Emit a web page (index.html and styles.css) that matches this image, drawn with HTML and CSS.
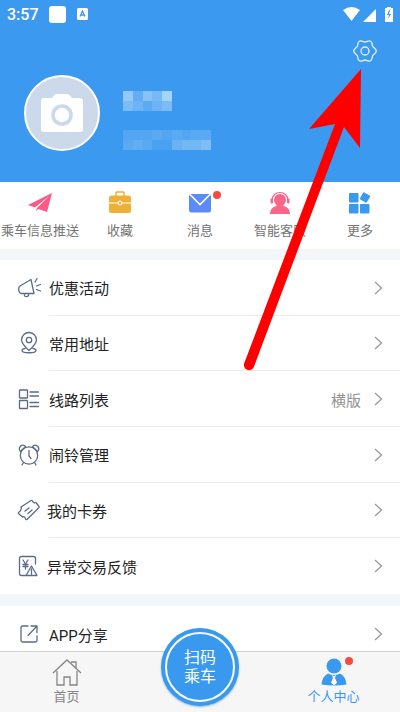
FILE: index.html
```html
<!DOCTYPE html>
<html lang="zh-CN">
<head>
<meta charset="utf-8">
<meta name="viewport" content="width=device-width, initial-scale=1">
<title>个人中心</title>
<link rel="stylesheet" href="styles.css">
</head>
<body>
<div class="app">
  <header class="header">
    <div class="status">
      <span class="clock">3:57</span>
      <span class="notice"></span>
      <svg class="notice-a" viewBox="0 0 11 12"><rect width="11" height="12" rx="1.5" fill="#fff"/><path d="M3 8.5 5.5 3 8 8.5M4 7h3" fill="none" stroke="#3b99ef" stroke-width="1.3"/></svg>
      <svg class="signals" viewBox="0 0 50 16"><g fill="#fff"><path d="M0 4Q8.500-2 17 4L8.500 15Z"/><path d="M20 16 33 3V16Z"/><path d="M44 1h4v1h1.500q.5 0 .5.500V15.500q0 .5-.5.500h-7q-.5 0-.5-.5V2.500q0-.5.500-.5H44Z"/></g><path d="m46 4-2 5h2l-1 4 3-5h-2l1-4Z" fill="#3b99ef"/></svg>
    </div>
    <button class="settings" aria-label="设置">
      <svg viewBox="0 0 24 24"><g fill="none" stroke="#e5f2fd" stroke-width="1.3"><path d="M23.300 12C23.300 9.800 20.700 9.100 19.800 7.500C18.900 5.900 19.500 3.300 17.650 2.200C15.800 1.100 13.800 3 12 3C10.200 3 8.200 1.100 6.350 2.200C4.500 3.300 5.100 5.900 4.200 7.500C3.300 9.100.7 9.800.7 12C.7 14.200 3.300 14.900 4.200 16.500C5.100 18.100 4.500 20.700 6.350 21.800C8.200 22.900 10.200 21 12 21C13.800 21 15.800 22.900 17.650 21.800C19.500 20.700 18.900 18.100 19.800 16.500C20.700 14.900 23.300 14.200 23.300 12Z"/><circle cx="12" cy="12" r="4"/></g></svg>
    </button>
    <div class="profile">
      <button class="avatar" aria-label="头像">
        <svg viewBox="0 0 44 40"><path d="M4 5h8l3-3.500Q15.500 1 16.500 1h11q1 0 1.500.5L32 5h8q3 0 3 3v28q0 3-3 3H4q-3 0-3-3V8q0-3 3-3Z" fill="#fff"/><circle cx="22" cy="22" r="9" fill="#fff" stroke="#cbd9eb" stroke-width="3.600"/></svg>
      </button>
      <div class="masked">
        <svg class="mask-name" viewBox="0 0 50 20" preserveAspectRatio="none" shape-rendering="crispEdges"><path fill="#93c8f9" d="M0 0h10v10H0z"/><path fill="#62aef4" d="M10 0h10v10H10z"/><path fill="#8ac1f7" d="M20 0h10v10H20z"/><path fill="#78b8f6" d="M30 0h10v10H30z"/><path fill="#a5d4fb" d="M40 0h10v10H40z"/><path fill="#7cbbf6" d="M0 10h10v10H0zM40 10h10v10H40z"/><path fill="#6db3f5" d="M10 10h10v10H10zM30 10h10v10H30z"/><path fill="#5aaaf4" d="M20 10h10v10H20z"/></svg>
        <svg class="mask-id" viewBox="0 0 90 20" preserveAspectRatio="none" shape-rendering="crispEdges"><path fill="#54a6f2" d="M0 0h90v20H0z"/><path fill="#59aaf3" d="M30 0h10v10H30zM50 0h10v10H50zM70 0h20v10H70zM0 10h10v10H0zM20 10h10v10H20z"/><path fill="#4aa1f1" d="M30 10h20v10H30z"/><path fill="#62aef4" d="M10 10h10v10H10z"/><path fill="#6bb2f4" d="M50 10h10v10H50z"/><path fill="#74b7f5" d="M60 10h20v10H60z"/><path fill="#80bdf6" d="M80 10h10v10H80z"/></svg>
      </div>
    </div>
  </header>

  <main class="content">
    <nav class="shortcuts">
      <a href="#"><svg viewBox="0 0 28 24"><path d="M26 2 2 14l7 2.500L23 5 11 17l-1 3 2.500-2L21 21Z" fill="#fb5a88"/></svg><span>乘车信息推送</span></a>
      <a href="#"><svg viewBox="0 0 28 24"><path d="M10 5V2q0-1 1-1h6q1 0 1 1v3" fill="none" stroke="#ecb136" stroke-width="1.500"/><rect x="3" y="4.500" width="22" height="17.500" rx="2.500" fill="#ecb136"/><path d="M3 12h22" stroke="#fff"/><circle cx="14" cy="12" r="2" fill="#ecb136" stroke="#fff"/></svg><span>收藏</span></a>
      <a href="#"><svg viewBox="0 0 28 24"><rect x="3" y="3" width="22" height="18.500" rx="2.500" fill="#5b8bf7"/><path d="m4 3.500 10 10 10-10" fill="none" stroke="#fff" stroke-width="1.600"/></svg><i class="dot"></i><span>消息</span></a>
      <a href="#"><svg viewBox="0 0 28 24"><g fill="#fa6588"><circle cx="14" cy="9" r="6"/><path d="M10.500 13h7v2q6.500 1.500 6.500 8H4q0-6.500 6.500-8Z"/><rect x="4.500" y="7.500" width="2.500" height="5" rx="1"/><rect x="21" y="7.500" width="2.500" height="5" rx="1"/></g><path d="M6 9a8 7.500 0 0 1 16 0" fill="none" stroke="#fa6588" stroke-width="1.200"/></svg><span>智能客服</span></a>
      <a href="#"><svg viewBox="0 0 28 24"><g fill="#3999ef"><rect x="3" y="2" width="9.500" height="9.500" rx="1"/><rect x="3" y="13" width="9.500" height="9.500" rx="1"/><rect x="14" y="13" width="9.500" height="9.500" rx="1"/><rect x="15" y="2.500" width="8" height="8" rx="1" transform="rotate(30 19 6.500)"/></g></svg><span>更多</span></a>
    </nav>

    <ul class="list">
      <li><a href="#"><svg class="icon" viewBox="0 0 24 24"><path d="M14 3.500 3 10Q.5 12 2.500 16.500L4 17.500 17 17.500ZM7.500 17.500v2.500q2.500 1.500 4-.5v-2M18 6l2-3.500M19.500 10l4-1.500M19.500 13.500l4 1.500"/></svg><span>优惠活动</span><svg class="chev" viewBox="0 0 9 14"><path d="m1 1 6.500 6L1 13"/></svg></a></li>
      <li><a href="#"><svg class="icon" viewBox="0 0 24 24"><path d="M12 19.500Q4.500 12.500 4.500 9a7.500 7.500 0 0 1 15 0Q19.500 12.500 12 19.500ZM8 17.500q-3 .5-3 2c0 3 14 3 14 0q0-1.500-3-2"/><circle cx="12" cy="9" r="2.700"/></svg><span>常用地址</span><svg class="chev" viewBox="0 0 9 14"><path d="m1 1 6.500 6L1 13"/></svg></a></li>
      <li><a href="#"><svg class="icon" viewBox="0 0 24 24"><rect x="2.500" y="3" width="8" height="8" rx=".5"/><rect x="2.500" y="13.500" width="8" height="8" rx=".5"/><path d="M13 5h8.500M13 9h8.500M13 15.500h8.500M13 19.500h8.500"/></svg><span>线路列表</span><em>横版</em><svg class="chev" viewBox="0 0 9 14"><path d="m1 1 6.500 6L1 13"/></svg></a></li>
      <li><a href="#"><svg class="icon" viewBox="0 0 24 24"><circle cx="12" cy="12.500" r="8.700"/><path d="M12 7.500v5.500l2 2.500M3.500 8.500C0 5 5.500-.5 8.500 3.500ZM20.500 8.500C24 5 18.500-.5 15.500 3.500ZM6.500 19.500 5 22M17.500 19.500 19 22"/></svg><span>闹铃管理</span><svg class="chev" viewBox="0 0 9 14"><path d="m1 1 6.500 6L1 13"/></svg></a></li>
      <li><a class="near" href="#"><svg class="icon" viewBox="0 0 24 24"><path d="M14 2.500q1-.5 1.500.5 1 2.500 3.500 1.500l3 4q.5 1-.5 1.500L10 21.500q-1 .5-1.500-.5-.5-3-3-2l-4-3.500q-.5-1 .5-1.500 3-2 2-5ZM8 13l4-3M11 15.500l4-3.500"/></svg><span>我的卡券</span><svg class="chev" viewBox="0 0 9 14"><path d="m1 1 6.500 6L1 13"/></svg></a></li>
      <li><a class="near" href="#"><svg class="icon" viewBox="0 0 24 24"><path d="M9 21.500H4.500q-2 0-2-2v-15q0-2 2-2h12q2 0 2 2V10M6 6l2.500 4L11 6M8.500 10v5M6 10.500h5M6 12.500h5M14.500 12 20 21.500H9ZM14.500 15v3M14.500 19v1"/></svg><span>异常交易反馈</span><svg class="chev" viewBox="0 0 9 14"><path d="m1 1 6.500 6L1 13"/></svg></a></li>
    </ul>

    <ul class="list more">
      <li><a href="#"><svg class="icon" viewBox="0 0 24 24"><path d="M11 4H5.500Q4 4 4 5.500v13Q4 20 5.500 20h13q1.500 0 1.500-1.500V14M11 13.500 20 4M14 4H20v6.500"/></svg><span>APP分享</span><svg class="chev" viewBox="0 0 9 14"><path d="m1 1 6.500 6L1 13"/></svg></a></li>
    </ul>
  </main>

  <nav class="tabs">
    <a href="#"><svg viewBox="0 0 32 30"><path d="M2 16 16 3l14 13M6 14v14h7v-8h6v8h7V14M20 5h5v6" fill="none" stroke="#858585" stroke-width="1.300"/></svg><span>首页</span></a>
    <button class="scan"><span>扫码<br>乘车</span></button>
    <a class="active" href="#"><svg viewBox="0 0 32 30"><g fill="#3999ef"><circle cx="16" cy="9" r="7.500"/><path d="M10 16.500Q16 19.500 22 16.500 27.500 19 28.500 27.500q-12.500 2-25 0Q4.500 19 10 16.500Z"/></g><path d="m14 18 2 1 2-1-1 3 2 4.500-3 3-3-3 2-4.500Z" fill="#fff"/></svg><i class="dot"></i><span>个人中心</span></a>
  </nav>

  <svg class="pointer" viewBox="0 0 118 302" aria-hidden="true"><path d="M118 0 66 60 92 55 1.300 294A5 5 0 0 0 10.800 298L101 58 117 79Z" fill="#f00"/></svg>
</div>
</body>
</html>
```
FILE: styles.css
```css
* { box-sizing: border-box; }
body {
  margin: 0;
  font-family: Roboto, "Noto Sans CJK SC", sans-serif;
  color: #222;
  background: #fff;
}
a { color: inherit; text-decoration: none; }
button { border: 0; padding: 0; font: inherit; cursor: pointer; }
svg { display: block; }

.app {
  position: relative;
  display: flex;
  flex-direction: column;
  height: 100vh;
}

.header {
  display: flex;
  flex-direction: column;
  flex: none;
  padding-bottom: 31px;
  background: #3b99ef;
}
.status {
  display: flex;
  align-items: center;
  height: 28px;
  padding: 0 7px;
  color: #fff;
}
.clock { width: 42px; font-size: 16px; font-weight: 500; }
.notice { width: 17px; height: 17px; border-radius: 3px; background: #fff; }
.notice-a { width: 11px; height: 12px; margin-left: 11px; }
.signals { width: 50px; height: 16px; margin-left: auto; }

.settings {
  align-self: flex-end;
  width: 24px;
  height: 24px;
  margin: 11px 23px 0 0;
  background: none;
}
.profile { display: flex; align-items: center; margin: 12px 24px 0; gap: 23px; }
.avatar {
  display: grid;
  place-items: center;
  width: 76px;
  height: 76px;
  border: 2px solid #fff;
  border-radius: 50%;
  background: #cbd9eb;
}
.avatar svg { width: 44px; height: 40px; }
.masked { display: grid; gap: 19px; padding-top: 14px; }
.mask-name { width: 49px; height: 20px; }
.mask-id { width: 88px; height: 20px; }

.content { flex: 1; min-height: 0; overflow-y: auto; scrollbar-width: none; }

.shortcuts { display: grid; grid-template-columns: repeat(5, 1fr); height: 67px; }
.shortcuts a {
  position: relative;
  display: flex;
  flex-direction: column;
  align-items: center;
  gap: 6px;
  padding-top: 9px;
  font-size: 13px;
  line-height: 20px;
  white-space: nowrap;
  color: #747474;
}
.shortcuts svg { width: 28px; height: 24px; }
.dot {
  position: absolute;
  top: 9px;
  left: calc(50% + 13px);
  width: 8px;
  height: 8px;
  border-radius: 50%;
  background: #f34b40;
}

.list {
  display: grid;
  grid-auto-rows: 1fr;
  height: 345px;
  margin: 0;
  padding: 0;
  list-style: none;
  border-top: 11px solid #f3f7f9;
}
.list.more { height: 68px; border-top-width: 12px; }
.list li { display: flex; padding-left: 17px; }
.list a {
  position: relative;
  flex: 1;
  display: flex;
  align-items: center;
  gap: 8px;
  padding-right: 17px;
  font-size: 15px;
}
.list a.near { gap: 6px; }
.list li:not(:last-child) a::after {
  content: "";
  position: absolute;
  left: 32px;
  right: 0;
  bottom: 0;
  height: 1px;
  background: #ececec;
}
.list em { margin-left: auto; font-style: normal; color: #929292; }
.icon {
  width: 24px;
  height: 24px;
  fill: none;
  stroke: #5b6b89;
  stroke-width: 1.3;
  stroke-linecap: round;
  stroke-linejoin: round;
}
.chev {
  width: 9px;
  height: 14px;
  margin-left: auto;
  fill: none;
  stroke: #999;
  stroke-width: 1.3;
}
.list em + .chev { margin-left: 5px; }

.tabs {
  display: grid;
  grid-template-columns: 1fr 78px 1fr;
  flex: none;
  height: 61px;
  border-top: 1px solid #d2d2d2;
  background: #f6f6f6;
}
.tabs a {
  position: relative;
  display: flex;
  flex-direction: column;
  align-items: center;
  width: 133px;
  padding-top: 5px;
  font-size: 13px;
  line-height: 20px;
  color: #858585;
}
.tabs a svg { width: 32px; height: 30px; }
.tabs a.active { justify-self: end; color: #3999ef; }
.tabs .dot { top: 5px; left: calc(50% + 11px); }
.scan {
  display: grid;
  width: 78px;
  height: 78px;
  margin-top: -24px;
  padding: 4px;
  border-radius: 50%;
  background: #3999ef;
  box-shadow: 0 1px 2px #8bb8dc;
  color: #fff;
  font-size: 16px;
  line-height: 19px;
  z-index: 1;
}
.scan span {
  display: grid;
  place-content: center;
  border: 2px solid #fff;
  border-radius: 50%;
}
.pointer {
  position: absolute;
  top: 69px;
  left: 243px;
  width: 118px;
  height: 302px;
  pointer-events: none;
}
```
